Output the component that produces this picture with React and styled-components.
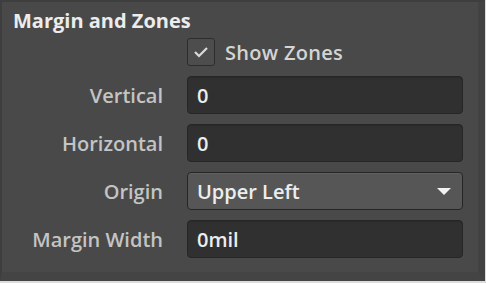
import React, { useState } from "react";
import styled, { createGlobalStyle } from "styled-components";

const GlobalStyle = createGlobalStyle`
	body {
		margin: 0;
		background: #dcdcdc;
		font-family: "Open Sans", "DejaVu Sans", sans-serif;
	}
`;

// --- Styled Components ---
const Panel = styled.div`
	width: 476px;
	height: 270px;
	background: #494949;
	border-left: 2px solid #3e3e3e;
	border-top: 2px solid #3e3e3e;
	border-right: 7px solid #424242;
	border-bottom: 9px solid #444444;
	box-sizing: content-box;
	display: flex;
	flex-direction: column;
`;

const Title = styled.h3`
	margin: 0;
	padding: 5px 0 0 11px;
	font-size: 20px;
	font-weight: 700;
	line-height: 28px;
	color: #ececec;
`;

const Form = styled.div`
	display: grid;
	grid-template-columns: 161px 1fr;
	column-gap: 24px;
	row-gap: 10px;
	padding: 3px 15px 0 0;
	align-items: center;
`;

const Label = styled.div`
	text-align: right;
	font-size: 20px;
	font-weight: 600;
	color: #c4c4c4;
`;

const CheckRow = styled.label`
	display: flex;
	align-items: center;
	gap: 10px;
	font-size: 20px;
	font-weight: 600;
	letter-spacing: 0.3px;
	color: #d4d4d4;
	height: 28px;
`;

const CheckBox = styled.span`
	width: 26px;
	height: 26px;
	border: 1px solid #2c2c2c;
	border-radius: 3px;
	background: #4d4d4d;
	display: flex;
	align-items: center;
	justify-content: center;
`;

const Field = styled.div`
	height: 36px;
	border: 1px solid #262626;
	border-radius: 4px;
	background: ${({ $select }) => ($select ? "#565656" : "#303030")};
	box-shadow: ${({ $select }) =>
		$select ? "inset 0 1px 0 #606060" : "inset 0 1px 0 #2a2a2a"};
	display: flex;
	align-items: center;
	justify-content: space-between;
	padding: 0 11px 0 9px;
	font-size: 20px;
	font-weight: 600;
	color: #ededed;
`;

const Arrow = styled.span`
	width: 0;
	height: 0;
	border-left: 7px solid transparent;
	border-right: 7px solid transparent;
	border-top: 7px solid #f2f2f2;
`;

const App = () => {
	const [showZones, setShowZones] = useState(true);

	const rows = [
		{ label: "Vertical", value: "0" },
		{ label: "Horizontal", value: "0" },
		{ label: "Origin", value: "Upper Left", select: true },
		{ label: "Margin Width", value: "0mil" },
	];

	return (
		<>
			<GlobalStyle />
			<Panel>
				<Title>Margin and Zones</Title>
				<Form>
					<div />
					<CheckRow onClick={() => setShowZones(!showZones)}>
						<CheckBox>
							{showZones && (
								<svg width="16" height="12" viewBox="0 0 16 12">
									<path
										d="M2 6 L6 10 L14 2"
										fill="none"
										stroke="#dadada"
										strokeWidth="2.2"
									/>
								</svg>
							)}
						</CheckBox>
						Show Zones
					</CheckRow>
					{rows.map((r) => (
						<React.Fragment key={r.label}>
							<Label>{r.label}</Label>
							<Field $select={r.select}>
								{r.value}
								{r.select && <Arrow />}
							</Field>
						</React.Fragment>
					))}
				</Form>
			</Panel>
		</>
	);
};

export default App;
